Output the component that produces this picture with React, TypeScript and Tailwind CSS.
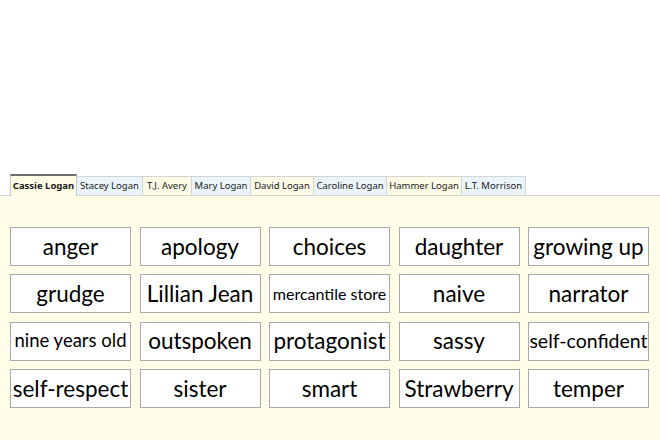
const tabs = [
  { name: "Stacey Logan", w: "w-[66px]", bg: "bg-[#eaf5fa]" },
  { name: "T.J. Avery", w: "w-[49px]", bg: "bg-[#fdfbe6]" },
  { name: "Mary Logan", w: "w-[59px]", bg: "bg-[#eaf5fa]" },
  { name: "David Logan", w: "w-[63px]", bg: "bg-[#fdfbe6]" },
  { name: "Caroline Logan", w: "w-[73px]", bg: "bg-[#eaf5fa]" },
  { name: "Hammer Logan", w: "w-[75px]", bg: "bg-[#fdfbe6]" },
  { name: "L.T. Morrison", w: "w-[64px]", bg: "bg-[#eaf5fa]" },
]

const words: { t: string; size?: string }[] = [
  { t: "anger" },
  { t: "apology" },
  { t: "choices" },
  { t: "daughter" },
  { t: "growing up" },
  { t: "grudge" },
  { t: "Lillian Jean" },
  { t: "mercantile store", size: "text-[16px]" },
  { t: "naive" },
  { t: "narrator" },
  { t: "nine years old", size: "text-[18.5px]" },
  { t: "outspoken" },
  { t: "protagonist" },
  { t: "sassy" },
  { t: "self-confident", size: "text-[19.5px]" },
  { t: "self-respect" },
  { t: "sister" },
  { t: "smart" },
  { t: "Strawberry" },
  { t: "temper" },
]

export default function App() {
  return (
    <div className="w-[660px] h-[440px] bg-white flex flex-col overflow-hidden">
      <div className="h-[173px]" />
      <div className="flex items-end pl-[10px] font-['Noto_Sans','Open_Sans',sans-serif] text-[9.5px] text-[#1a1a1a]">
        <div className="w-[67px] h-[22px] flex items-center justify-center bg-[#fffde8] border-t-2 border-x border-t-[#6e6e6e] border-x-[#c8c8c8] font-bold relative top-[1px]">
          Cassie Logan
        </div>
        {tabs.map((tab) => (
          <div
            key={tab.name}
            className={`${tab.w} ${tab.bg} h-[19px] flex items-center justify-center border-t border-r border-[#d4d4d4] whitespace-nowrap`}
          >
            {tab.name}
          </div>
        ))}
      </div>
      <div className="flex-1 bg-[#fffde8] border-t border-[#d4d4d4] pt-[31px] pl-[10px]">
        <div className="grid grid-cols-[repeat(5,121px)] gap-x-[8.5px] gap-y-[8.3px] font-['Lato','Open_Sans',sans-serif] text-black">
          {words.map((w) => (
            <div
              key={w.t}
              className={`h-[39px] bg-white border border-[#a9a9a9] flex items-center justify-center whitespace-nowrap overflow-hidden ${w.size ?? "text-[22.5px]"}`}
            >
              {w.t}
            </div>
          ))}
        </div>
      </div>
    </div>
  )
}
